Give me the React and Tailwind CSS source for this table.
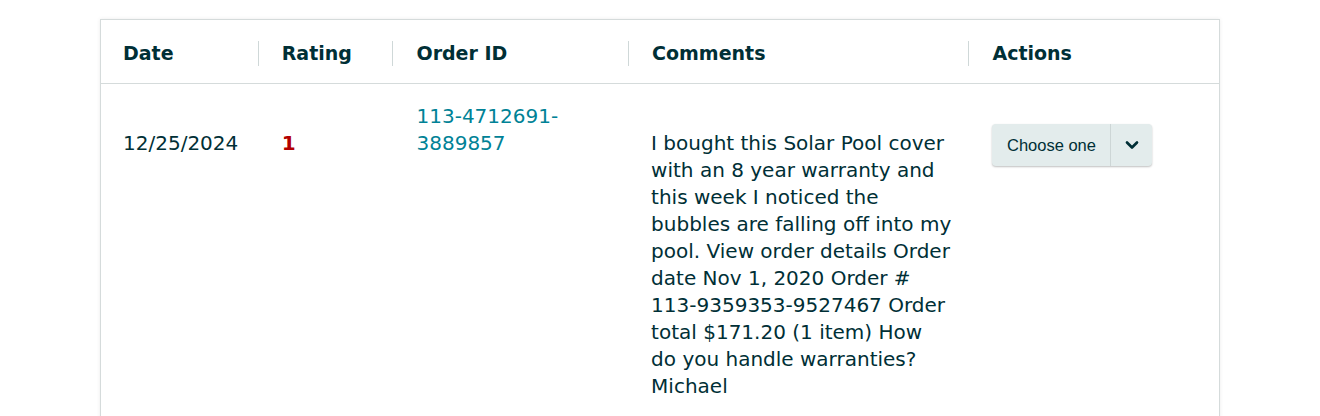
import { ChevronDown } from 'lucide-react';

const columns = [
  { label: 'Date', width: 'w-[157px]', first: true },
  { label: 'Rating', width: 'w-[135px]' },
  { label: 'Order ID', width: 'w-[236px]' },
  { label: 'Comments', width: 'w-[341px]' },
  { label: 'Actions', width: 'w-[251px]' },
];

const review = {
  date: '12/25/2024',
  rating: 1,
  orderId: '113-4712691-3889857',
  comment:
    'I bought this Solar Pool cover with an 8 year warranty and this week I noticed the bubbles are falling off into my pool. View order details Order date Nov 1, 2020 Order # 113-9359353-9527467 Order total $171.20 (1 item) How do you handle warranties? Michael',
};

const App = () => {
  return (
    <div className="min-h-[416px] bg-white pt-[19px] font-['DejaVu_Sans',Verdana,sans-serif] text-[#002f36]">
      <div className="mx-auto w-[1120px] border border-[#d5dbdb] shadow-[0_0_4px_rgba(0,0,0,0.08)] bg-white">
        {/* header */}
        <div className="flex h-[64px] border-b border-[#d5dbdb]">
          {columns.map((col) => (
            <div key={col.label} className={`${col.width} flex items-center pt-[3px]`}>
              {col.first ? (
                <span className="pl-[22px] text-[19px] font-bold">{col.label}</span>
              ) : (
                <span className="flex h-[25px] items-center border-l border-[#cfd8d8] pl-[23px] text-[19px] font-bold">
                  {col.label}
                </span>
              )}
            </div>
          ))}
        </div>

        {/* row */}
        <div className="flex pb-[20px] text-[20px] leading-[27px]">
          <div className="w-[157px] pl-[22px] pt-[46px]">{review.date}</div>
          <div className="w-[135px] pl-6 pt-[46px] font-bold text-[#b30000]">{review.rating}</div>
          <div className="w-[236px] pl-6 pr-6 pt-[19px]">
            <a href="#" className="text-[#008296]">
              113-4712691-
              <br />
              3889857
            </a>
          </div>
          <div className="w-[341px] pl-[23px] pr-[17px] pt-[46px]">{review.comment}</div>
          <div className="w-[251px] pl-[24px] pt-[40px]">
            <div className="flex h-[42px] w-[160px] overflow-hidden rounded-[4px] bg-[#e3ecec] shadow-[0_1px_2px_rgba(0,0,0,0.25)] font-['Liberation_Sans',Arial,sans-serif] text-[16.5px] text-[#002f36]">
              <button className="flex w-[119px] items-center justify-center border-r border-[#cdd6d6]">
                Choose one
              </button>
              <button className="flex flex-1 items-center justify-center">
                <ChevronDown size={20} strokeWidth={3.2} />
              </button>
            </div>
          </div>
        </div>
      </div>
    </div>
  );
};

export default App;
